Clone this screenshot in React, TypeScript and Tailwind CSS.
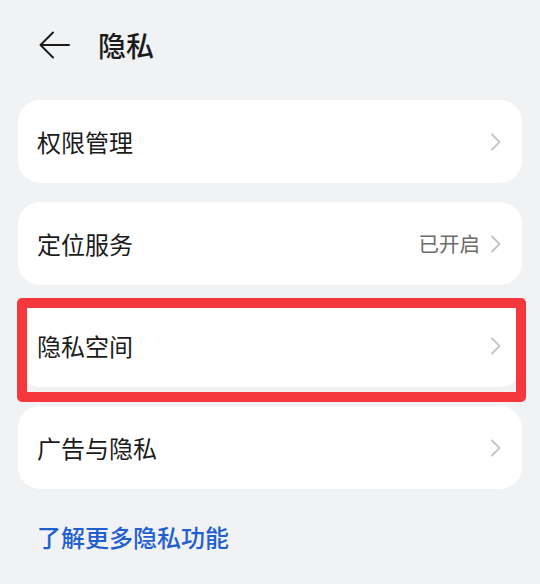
import React from "react";

const Chevron = () => (
  <svg width="12" height="18" viewBox="0 0 12 18" fill="none">
    <path d="M2 1.5 L9.5 9 L2 16.5" stroke="#c4c4c6" strokeWidth="1.8" strokeLinecap="round" strokeLinejoin="round" />
  </svg>
);

const Row = ({ label, value }: { label: string; value?: string }) => (
  <div className="flex h-[83px] items-center justify-between rounded-[22px] bg-white pl-[19px] pr-[20px]">
    <span className="text-[24px] leading-none text-[#1b1b1b]">{label}</span>
    <div className="flex items-center gap-[10px]">
      {value && <span className="text-[20.5px] leading-none text-[#6b6b6b]">{value}</span>}
      <Chevron />
    </div>
  </div>
);

export default function App() {
  return (
    <div
      className="min-h-[584px] w-[540px] bg-[#f1f2f4] px-[18px]"
      style={{ fontFamily: '"Noto Sans CJK SC", "Noto Sans", sans-serif' }}
    >
      <div className="flex h-[90px] items-center">
        <svg className="ml-[21px]" width="31" height="28" viewBox="0 0 31 28" fill="none">
          <path d="M30 14 H2 M14 1.5 L1.5 14 L14 26.5" stroke="#1b1b1b" strokeWidth="2" strokeLinecap="round" strokeLinejoin="round" />
        </svg>
        <span className="ml-[28px] text-[28px] font-medium leading-none text-[#1b1b1b]">隐私</span>
      </div>
      <div className="mt-[10px] flex flex-col gap-[19px]">
        <Row label="权限管理" />
        <Row label="定位服务" value="已开启" />
        <div className="relative">
          <Row label="隐私空间" />
          <div className="pointer-events-none absolute -top-[6px] -left-[1px] -right-[4px] -bottom-[15px] rounded-[5px] border-[10px] border-[#f5383b]" />
        </div>
        <Row label="广告与隐私" />
      </div>
      <div className="mt-[32px] pl-[19px] text-[24px] font-medium leading-[32px] text-[#1f5fd0]">了解更多隐私功能</div>
    </div>
  );
}
